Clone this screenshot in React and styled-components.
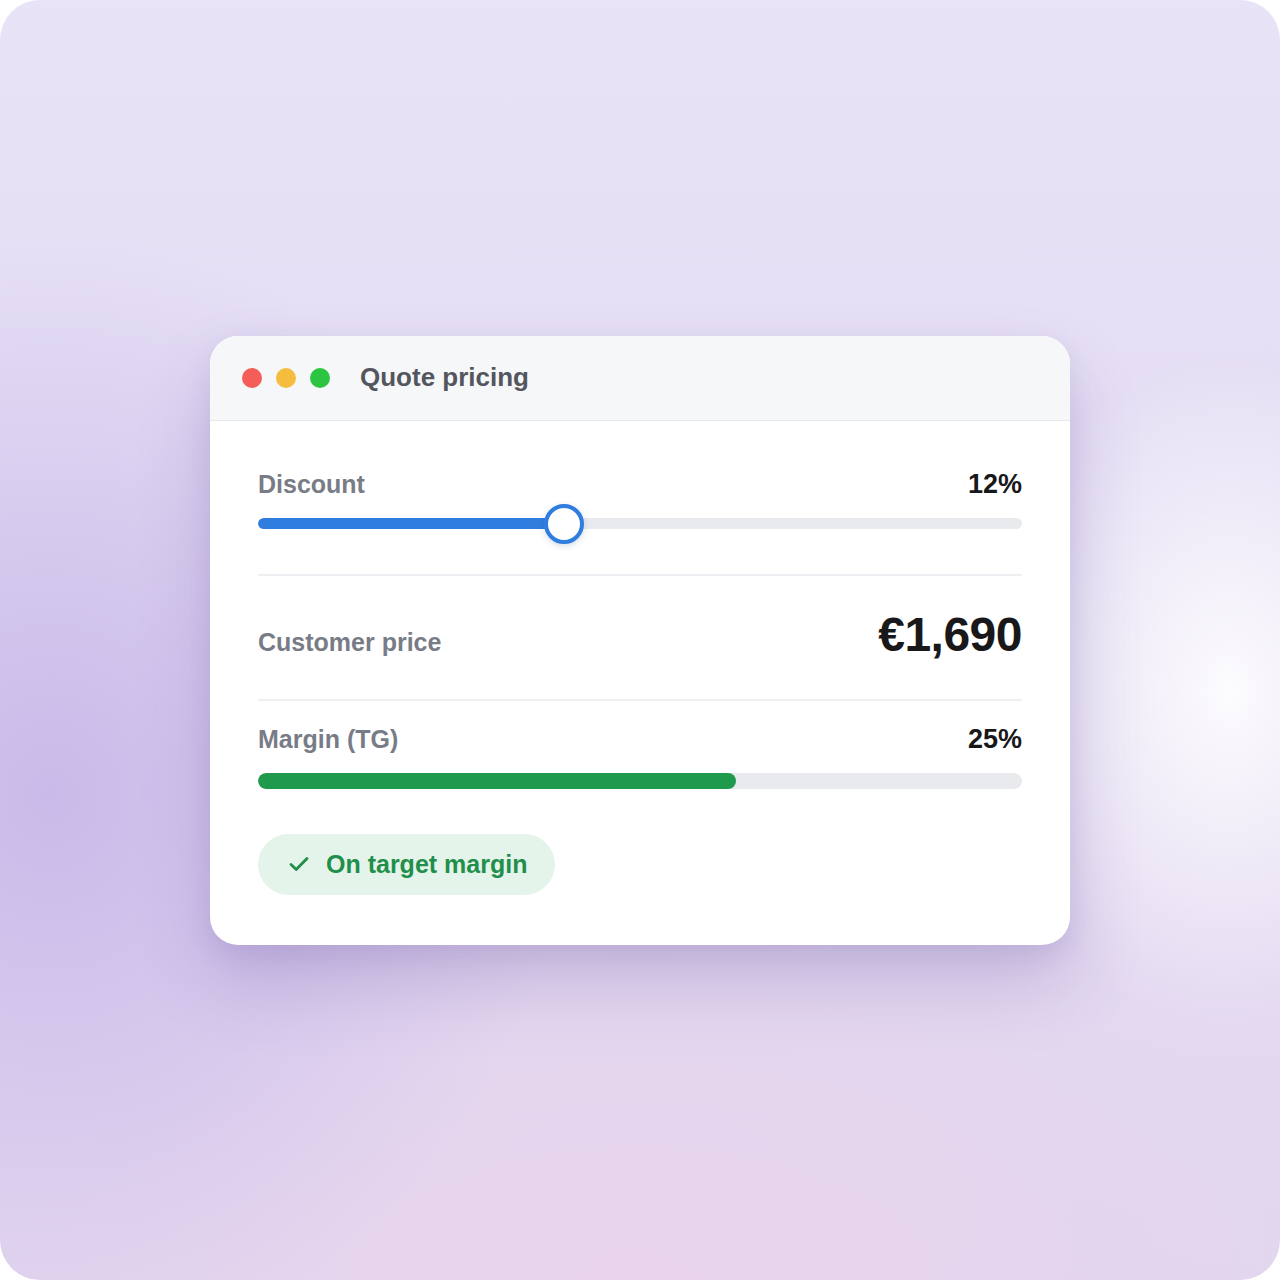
import React from 'react';
import styled, { createGlobalStyle } from 'styled-components';

const GlobalStyle = createGlobalStyle`
  * {
    margin: 0;
    padding: 0;
    box-sizing: border-box;
  }

  body {
    background: #ffffff;
    font-family: 'Liberation Sans', Arial, sans-serif;
  }
`;

// Rounded lavender canvas behind the window
const Frame = styled.div`
  width: 1280px;
  height: 1280px;
  border-radius: 40px;
  overflow: hidden;
  display: flex;
  align-items: center;
  justify-content: center;
  background:
    radial-gradient(ellipse 240px 340px at 96% 54%, rgba(255, 255, 255, 0.9) 0%, rgba(255, 255, 255, 0) 100%),
    radial-gradient(ellipse 520px 560px at 4% 62%, rgba(198, 182, 232, 0.9) 0%, rgba(198, 182, 232, 0) 100%),
    radial-gradient(ellipse 700px 360px at 50% 100%, rgba(234, 212, 236, 0.9) 0%, rgba(234, 212, 236, 0) 100%),
    linear-gradient(180deg, #e8e3f7 0%, #e4dcf3 45%, #e2d6ef 100%);
`;

const Window = styled.div`
  width: 860px;
  background: #ffffff;
  border-radius: 28px;
  overflow: hidden;
  box-shadow:
    0 40px 70px rgba(90, 70, 150, 0.22),
    0 10px 24px rgba(90, 70, 150, 0.1);
`;

const TitleBar = styled.div`
  height: 85px;
  display: flex;
  align-items: center;
  padding-left: 32px;
  background: #f6f7f9;
  border-bottom: 1px solid #e7e8ec;
`;

const Dots = styled.div`
  display: flex;
  gap: 14px;
  margin-right: 30px;
`;

const Dot = styled.span`
  width: 20px;
  height: 20px;
  border-radius: 50%;
  background: ${p => p.color};
`;

const Title = styled.h1`
  font-size: 26px;
  font-weight: 700;
  color: #53565d;
`;

const Body = styled.div`
  padding: 48px 48px 50px;
  display: flex;
  flex-direction: column;
`;

const Row = styled.div`
  display: flex;
  justify-content: space-between;
  align-items: baseline;
  margin-top: ${p => p.mt || 0}px;
`;

const Label = styled.span`
  font-size: 25px;
  font-weight: 700;
  color: #787c86;
  line-height: 30px;
`;

const Value = styled.span`
  font-size: ${p => (p.big ? '48px' : '27px')};
  font-weight: 700;
  color: #18181b;
  line-height: ${p => (p.big ? '56px' : '30px')};
  letter-spacing: ${p => (p.big ? '-0.5px' : '0')};
`;

const SliderWrap = styled.div`
  position: relative;
  height: 40px;
  margin-top: 5px;
  display: flex;
  align-items: center;
`;

const Track = styled.div`
  position: relative;
  width: 100%;
  height: ${p => p.h}px;
  border-radius: 999px;
  background: #e9eaed;
  overflow: hidden;
`;

const Fill = styled.div`
  height: 100%;
  border-radius: 999px;
  background: ${p => p.color};
`;

const Thumb = styled.div`
  position: absolute;
  top: 0;
  width: 40px;
  height: 40px;
  margin-left: -20px;
  border-radius: 50%;
  background: #ffffff;
  border: 4px solid #2f7ddf;
  box-shadow: 0 2px 6px rgba(30, 60, 120, 0.18);
`;

const Divider = styled.hr`
  border: none;
  height: 2px;
  background: #eeeff2;
  margin-top: ${p => p.mt}px;
`;

const Bar = styled.div`
  margin-top: 19px;
`;

const Badge = styled.div`
  align-self: flex-start;
  margin-top: 45px;
  height: 61px;
  display: flex;
  align-items: center;
  gap: 17px;
  padding: 0 28px 0 31px;
  border-radius: 999px;
  background: #e5f4ea;
  color: #1f8f4b;
  font-size: 25px;
  font-weight: 700;
`;

const CheckIcon = () => (
  <svg width="20" height="16" viewBox="0 0 20 16" fill="none">
    <path d="M2 8.5 L7.2 13.5 L18 2.5" stroke="#1f8f4b" strokeWidth="2.8" strokeLinecap="round" strokeLinejoin="round" />
  </svg>
);

const App = () => {
  const discount = 40;
  const margin = 62.6;

  return (
    <>
      <GlobalStyle />
      <Frame>
        <Window>
          <TitleBar>
            <Dots>
              <Dot color="#f45d58" />
              <Dot color="#f6bc3e" />
              <Dot color="#2bc541" />
            </Dots>
            <Title>Quote pricing</Title>
          </TitleBar>

          <Body>
            <Row>
              <Label>Discount</Label>
              <Value>12%</Value>
            </Row>
            <SliderWrap>
              <Track h={11}>
                <Fill color="#2f7ddf" style={{ width: `${discount}%` }} />
              </Track>
              <Thumb style={{ left: `${discount}%` }} />
            </SliderWrap>

            <Divider mt={30} />

            <Row mt={31}>
              <Label>Customer price</Label>
              <Value big>€1,690</Value>
            </Row>

            <Divider mt={36} />

            <Row mt={23}>
              <Label>Margin (TG)</Label>
              <Value>25%</Value>
            </Row>
            <Bar>
              <Track h={16}>
                <Fill color="#1f9a4c" style={{ width: `${margin}%` }} />
              </Track>
            </Bar>

            <Badge>
              <CheckIcon />
              On target margin
            </Badge>
          </Body>
        </Window>
      </Frame>
    </>
  );
};

export default App;
